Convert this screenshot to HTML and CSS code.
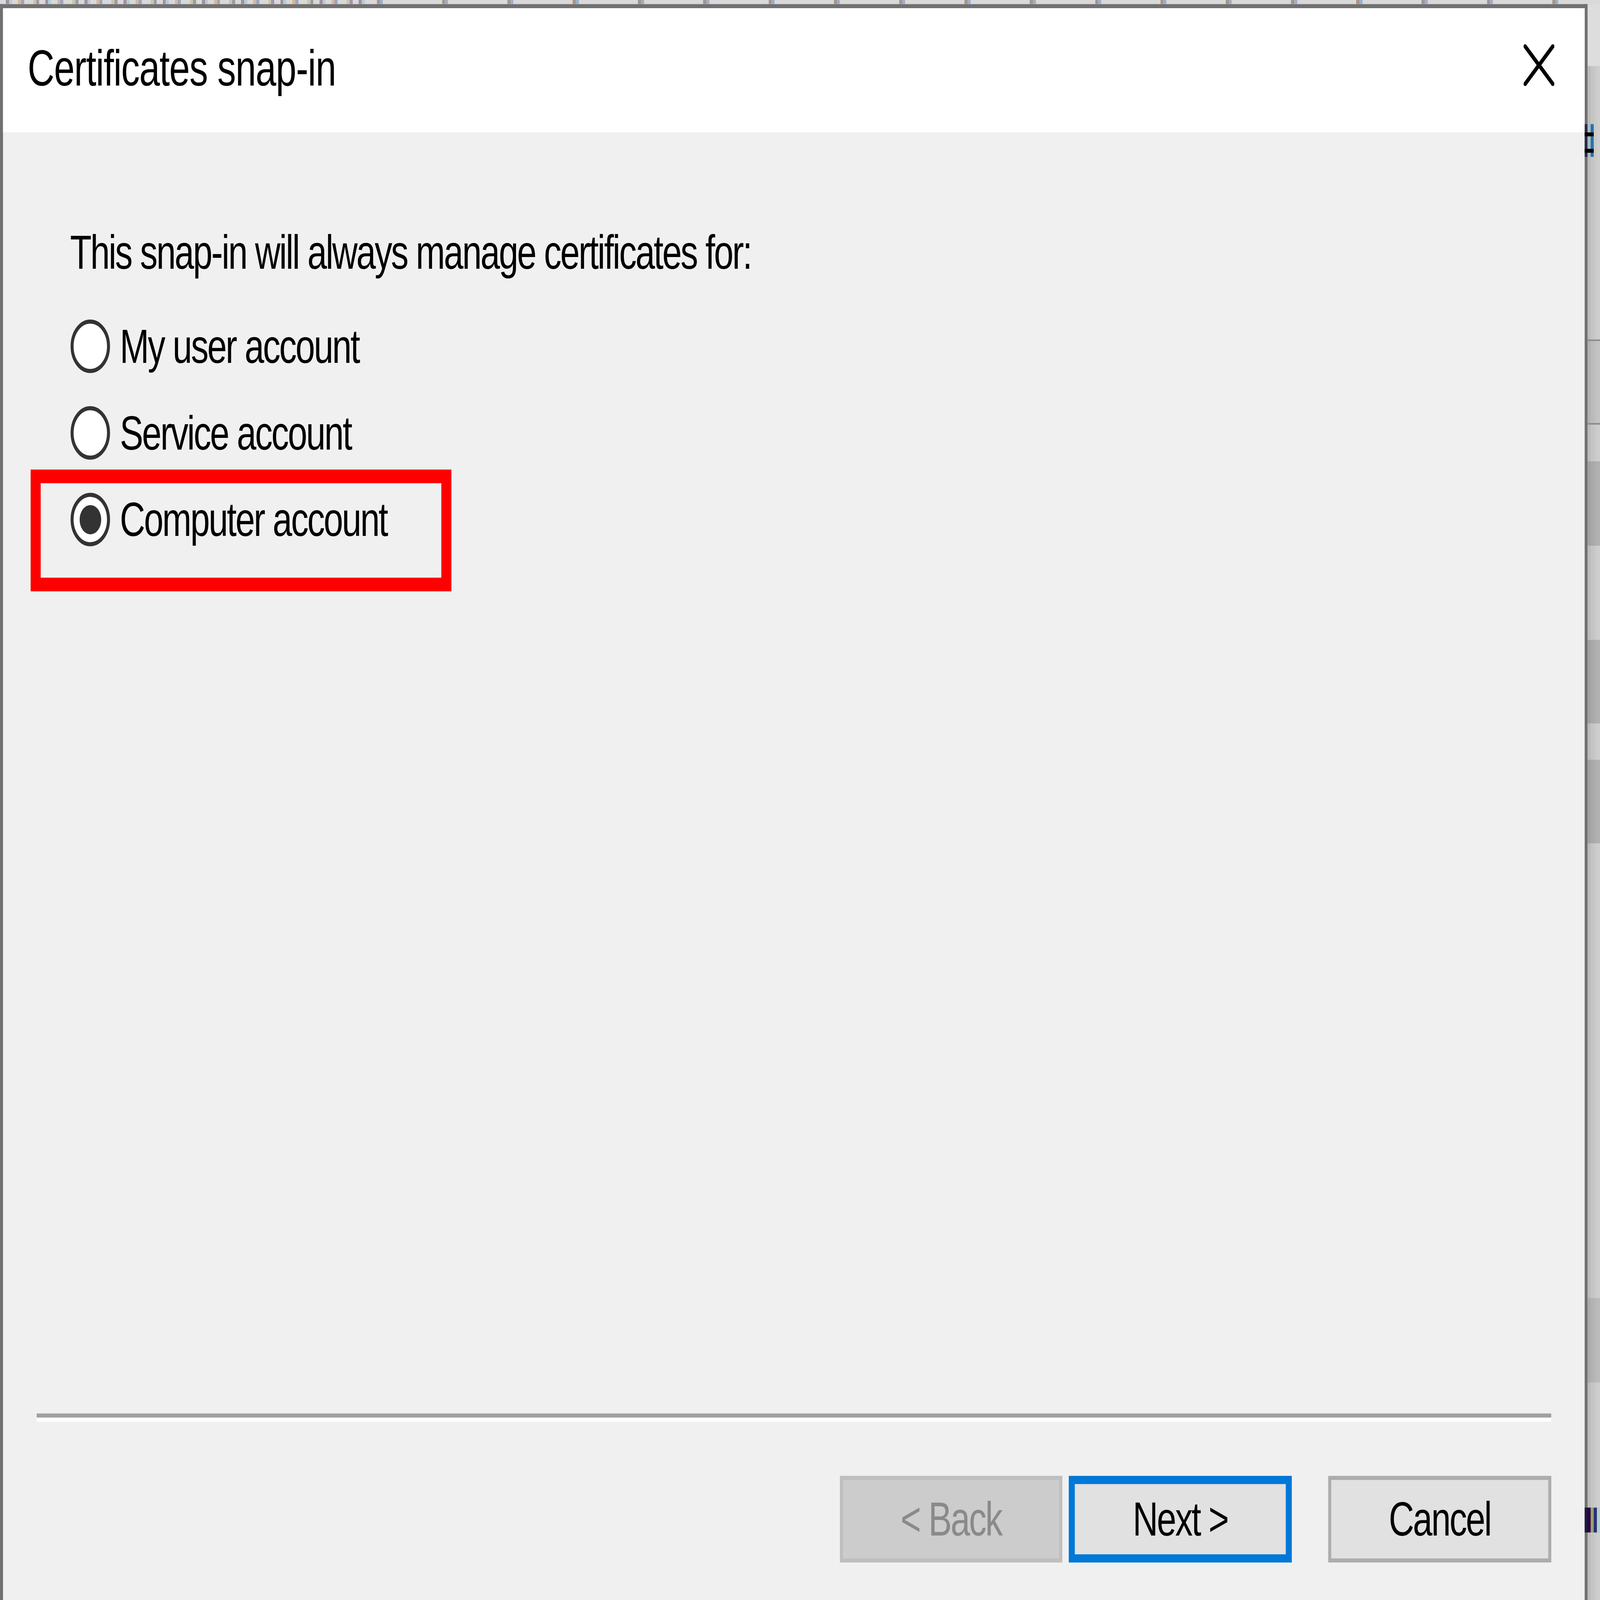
FILE: index.html
```html
<!DOCTYPE html>
<html lang="en">
<head>
    <meta charset="UTF-8">
    <meta name="viewport" content="width=device-width, initial-scale=1.0">
    <title>Certificates snap-in</title>
    <link rel="stylesheet" href="styles.css">
</head>
<body>
    <div class="viewport">
        <div class="screen">
            <div class="backdrop-top"></div>

            <div class="stage">
                <div class="dialog">
                    <div class="titlebar">
                        <span class="title">Certificates snap-in</span>
                        <svg class="close" width="122" height="122" viewBox="0 0 122 122">
                            <line x1="6" y1="6" x2="116" y2="116" />
                            <line x1="116" y1="6" x2="6" y2="116" />
                        </svg>
                    </div>

                    <div class="content">
                        <p class="prompt">This snap-in will always manage certificates for:</p>

                        <div class="options">
                            <label class="option"><span class="radio"></span>My user account</label>
                            <label class="option"><span class="radio"></span>Service account</label>
                            <label class="option"><span class="radio checked"></span>Computer account<span class="highlight"></span></label>
                        </div>

                        <div class="footer">
                            <div class="separator"></div>
                            <div class="buttons">
                                <button class="button disabled">&lt; Back</button>
                                <button class="button default">Next &gt;</button>
                                <button class="button cancel">Cancel</button>
                            </div>
                        </div>
                    </div>
                </div>

                <div class="backdrop-side">
                    <span class="side-mark upper"></span>
                    <span class="side-mark lower"></span>
                </div>
            </div>
        </div>
    </div>

    <script>
        // The screen is drawn at 6370x4692; stretch it to whatever window we get
        function fitScreen() {
            const screen = document.querySelector('.screen');
            const sx = window.innerWidth / 6370;
            const sy = window.innerHeight / 4692;
            screen.style.transform = `scale(${sx}, ${sy})`;
        }

        fitScreen();
        window.addEventListener('resize', fitScreen);
    </script>
</body>
</html>
```

FILE: styles.css
```css
/* General */
html,
body {
    overflow: hidden;
}

body {
    margin: 0;
    font-family: 'Liberation Sans', Arial, sans-serif;
    background-color: #dadada;
    color: #000;
}

.viewport {
    width: 100vw;
    height: 100vh;
    overflow: clip;
}

.screen {
    display: flex;
    flex-direction: column;
    width: 6370px;
    height: 4692px;
    transform-origin: 0 0;
}

/* Window behind the dialog (only slivers of it show) */
.backdrop-top {
    height: 12px;
    flex: none;
    background:
        repeating-linear-gradient(to right,
            #d9d9d9 0 24px, #a4909a 24px 36px, #b4ccdc 36px 48px,
            #d9d9d9 48px 72px, #d6b89a 72px 84px, #9aa6c0 84px 96px,
            #d9d9d9 96px 132px, #c8c8a8 132px 144px, #a098a8 144px 156px) 0 0 / 1460px 12px no-repeat,
        repeating-linear-gradient(to right,
            #d9d9d9 0 200px, #a89488 200px 212px, #9cb0cc 212px 224px, #d9d9d9 224px 260px) #d9d9d9;
}

.stage {
    flex: 1;
    display: flex;
    min-height: 0;
}

.backdrop-side {
    flex: 1;
    display: flex;
    flex-direction: column;
    background:
        linear-gradient(to bottom,
            #dddddd 0 182px,
            transparent 182px 984px,
            #8c8c8c 984px 988px,
            rgba(0, 0, 0, 0.05) 988px 1229px,
            #8c8c8c 1229px 1233px,
            transparent 1233px 1341px,
            rgba(0, 0, 0, 0.14) 1341px 1588px,
            transparent 1588px 1864px,
            rgba(0, 0, 0, 0.14) 1864px 2109px,
            transparent 2109px 2216px,
            rgba(0, 0, 0, 0.14) 2216px 2461px,
            transparent 2461px 3795px,
            rgba(0, 0, 0, 0.09) 3795px 4042px,
            transparent 4042px 4413px,
            #5e5e5e 4413px 4425px,
            #d2d2d2 4425px 4438px,
            transparent 4438px),
        linear-gradient(to right, #bbbbbb 0 12px, #c4c4c4 12px 24px, #c9c9c9 24px 36px, #cecece 36px);
}

/* bits of text from the window behind, cut by the dialog edge */
.side-mark {
    display: block;
    flex: none;
    margin-left: -12px;
}

.side-mark.upper {
    margin-top: 352px;
    width: 36px;
    height: 96px;
    background:
        linear-gradient(to bottom,
            transparent 0 24px, #000 24px 36px, transparent 36px 72px, #000 72px 84px, transparent 84px),
        linear-gradient(to right, #2b2b47 0 12px, #a0bebe 12px 24px, #2f6fae 24px 36px);
}

.side-mark.lower {
    margin-top: 3961px;
    width: 61px;
    height: 73px;
    background: linear-gradient(to right,
        #1b1b3d 0 12px, #2c0048 12px 24px, #8ea56c 24px 36px, #2e2e70 36px 48px, #b0d0d0 48px);
}

/* Dialog frame */
.dialog {
    width: 6321px;
    flex: none;
    box-sizing: border-box;
    border: 12px solid #707070;
    border-bottom: none;
    display: flex;
    flex-direction: column;
    background-color: #f0f0f0;
}

.titlebar {
    height: 364px;
    flex: none;
    box-sizing: border-box;
    display: flex;
    align-items: center;
    justify-content: space-between;
    padding: 0 121px 0 98px;
    background-color: #fff;
}

.title {
    font-size: 148px;
    letter-spacing: -2px;
    padding-bottom: 12px;
}

.close {
    margin-bottom: 30px;
}

.close line {
    stroke: #000;
    stroke-width: 13;
    stroke-linecap: square;
}

/* Content */
.content {
    flex: 1;
    display: flex;
    flex-direction: column;
}

.prompt {
    margin: 272px 0 0 267px;
    font-size: 140px;
    line-height: 160px;
    letter-spacing: -5px;
}

.options {
    margin-top: 117px;
    padding-left: 269px;
    display: flex;
    flex-direction: column;
    gap: 97px;
}

.option {
    position: relative;
    display: flex;
    align-items: center;
    gap: 39px;
    height: 157px;
    font-size: 140px;
    line-height: 160px;
    letter-spacing: -5px;
}

.radio {
    width: 157px;
    height: 157px;
    flex: none;
    box-sizing: border-box;
    border: 12px solid #333;
    border-radius: 50%;
    background-color: #fff;
    display: flex;
    align-items: center;
    justify-content: center;
}

.radio.checked::after {
    content: '';
    width: 86px;
    height: 86px;
    border-radius: 50%;
    background-color: #333;
}

/* Red annotation box */
.highlight {
    position: absolute;
    left: -159px;
    top: -68px;
    width: 1675px;
    height: 357px;
    box-sizing: border-box;
    border: 40px solid #ff0000;
    pointer-events: none;
}

/* Footer */
.footer {
    margin-top: auto;
}

.separator {
    margin: 0 133px 0 134px;
    border-top: 12px solid #a0a0a0;
    border-bottom: 12px solid #fff;
}

.buttons {
    display: flex;
    justify-content: flex-end;
    gap: 26px;
    padding: 159px 133px 110px 0;
}

.button {
    width: 888px;
    height: 254px;
    box-sizing: border-box;
    padding: 0;
    display: flex;
    align-items: center;
    justify-content: center;
    font-family: 'Liberation Sans', Arial, sans-serif;
    font-size: 140px;
    letter-spacing: -5px;
    color: #000;
    background-color: #e1e1e1;
    border: 12px solid #adadad;
}

.button.disabled {
    width: 885px;
    color: #8a8a8a;
    background-color: #cccccc;
    border-color: #bfbfbf;
}

.button.default {
    border: 24px solid #0078d7;
}

.button.cancel {
    margin-left: 119px;
}
```
